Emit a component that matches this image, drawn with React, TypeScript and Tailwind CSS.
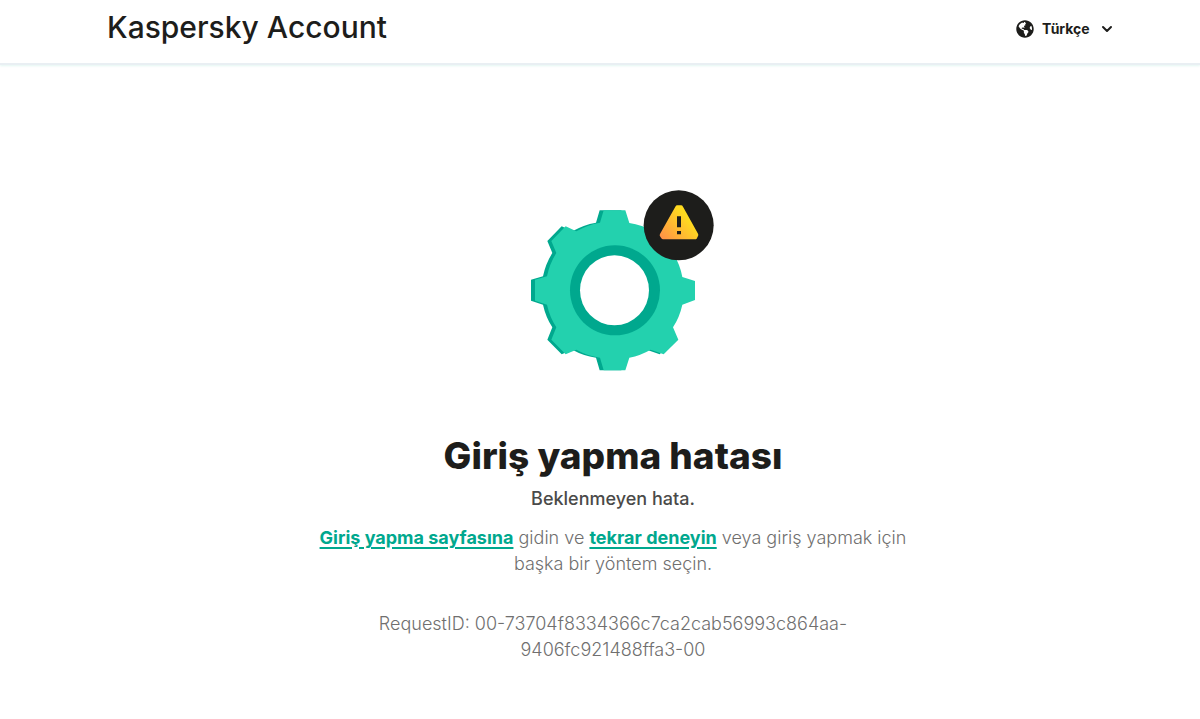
import { ChevronDown } from "lucide-react";
import { FaGlobeAmericas } from "react-icons/fa";

const requestId = "00-73704f8334366c7ca2cab56993c864aa-9406fc921488ffa3-00";

function Header() {
  return (
    <header className="border-b-2 border-[#e9eff3] shadow-[0_1px_2px_rgba(29,180,160,0.12)]">
      <div className="flex h-[63px] items-start justify-between pr-[85px] pl-[107px]">
        <a
          href="/"
          className="pt-2 text-[30px] leading-[38px] font-medium text-[#1d1d1b]"
        >
          Kaspersky Account
        </a>
        <label className="mt-[17px] flex h-6 items-center">
          <FaGlobeAmericas size={18} className="text-[#1d1d1b]" aria-hidden="true" />
          <select
            aria-label="Dil"
            className="ml-2 cursor-pointer appearance-none bg-transparent text-[14px] leading-6 font-bold text-[#1d1d1b]"
          >
            <option>Türkçe</option>
          </select>
          <ChevronDown size={16} strokeWidth={3} className="ml-[9px] text-[#1d1d1b]" aria-hidden="true" />
        </label>
      </div>
    </header>
  );
}

const gearPath =
  "M251 90H316L328 128A207 207 0 0 1 400 152L431 138L475 182L459 218A207 207 0 0 1 487 290L525 302V359L487 373A207 207 0 0 1 459 441L475 478L431 522L392 508A207 207 0 0 1 328 532L316 570H251L240 532A207 207 0 0 1 169 508L137 522L94 478L109 441A207 207 0 0 1 81 373L45 361V298L81 288A207 207 0 0 1 109 218L94 182L137 138L169 153A207 207 0 0 1 240 127Z";

function ErrorArt() {
  return (
    <svg
      className="h-[181px] w-[184px]"
      viewBox="30 29 552 543"
      fill="none"
      aria-hidden="true"
    >
      <defs>
        <linearGradient id="warning" x1="425" y1="177" x2="500" y2="110" gradientUnits="userSpaceOnUse">
          <stop stopColor="#ff9048" />
          <stop offset="1" stopColor="#ffdb1f" />
        </linearGradient>
      </defs>
      <path d={gearPath} fill="#00a88e" transform="translate(-12 0)" />
      <path d={gearPath} fill="#23d1ae" />
      <circle cx="285" cy="330" r="135" fill="#00a88e" />
      <ellipse cx="283.5" cy="330" rx="103.5" ry="105" fill="#fff" />
      <circle cx="476" cy="135" r="105" fill="#1d1d1b" />
      <path
        d="M472 75H483Q487 75 489 79L534 160Q536 164 534 167L530 175Q528 177 525 177H429Q426 177 424 174L420 168Q418 165 420 161L466 79Q468 75 472 75Z"
        fill="url(#warning)"
      />
      <path d="M471 108H483V141H471ZM471 152H483V162H471Z" fill="#1d1d1b" />
    </svg>
  );
}

export default function App() {
  return (
    <div className="min-h-screen bg-white font-['Inter',sans-serif]">
      <Header />
      <main className="flex flex-col items-center pt-[125px] pr-4 pb-12 pl-[42px] text-center">
        <div className="pl-[18px]">
          <ErrorArt />
        </div>
        <h1 className="mt-[61px] text-[37px] leading-[48px] font-extrabold text-[#1d1d1b]">
          Giriş yapma hatası
        </h1>
        <p className="mt-1.5 text-[18px] leading-[26px] font-medium text-[#4a4a49]">Beklenmeyen hata.</p>
        <p className="mt-[13px] max-w-[600px] text-[18px] leading-[26px] font-light text-[#706f6f]">
          <a href="/login" className="font-bold text-[#00a88e] underline decoration-2 underline-offset-3">
            Giriş yapma sayfasına
          </a>{" "}
          gidin ve{" "}
          <a href="/retry" className="font-bold text-[#00a88e] underline decoration-2 underline-offset-3">
            tekrar deneyin
          </a>{" "}
          veya giriş yapmak için başka bir yöntem seçin.
        </p>
        <p className="mt-[34px] max-w-[600px] text-[18px] leading-[26px] font-light text-[#706f6f]">
          RequestID: {requestId}
        </p>
      </main>
    </div>
  );
}
